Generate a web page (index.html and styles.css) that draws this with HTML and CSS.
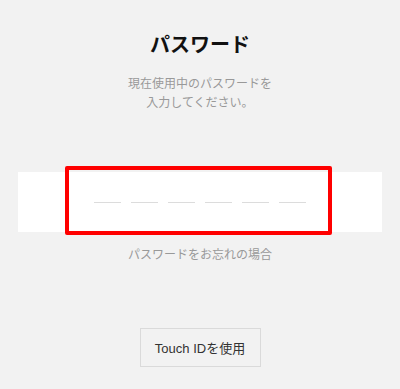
FILE: index.html
```html
<!DOCTYPE html>
<html lang="ja">
<head>
    <meta charset="UTF-8">
    <meta name="viewport" content="width=device-width, initial-scale=1.0">
    <title>パスワード</title>
    <link rel="stylesheet" href="styles.css">
</head>
<body>
    <div class="page">
        <h1 class="title">パスワード</h1>
        <p class="lead">現在使用中のパスワードを<br>入力してください。</p>

        <div class="code-strip">
            <div class="code-dashes">
                <span class="dash"></span>
                <span class="dash"></span>
                <span class="dash"></span>
                <span class="dash"></span>
                <span class="dash"></span>
                <span class="dash"></span>
            </div>
            <div class="highlight"></div>
        </div>

        <p class="forgot">パスワードをお忘れの場合</p>

        <button type="button" class="touch-btn">Touch IDを使用</button>
    </div>
</body>
</html>
```

FILE: styles.css
```css
html, body {
    margin: 0;
    padding: 0;
    background: #f2f2f2;
}
body {
    font-family: "Noto Sans CJK JP", "Noto Sans", sans-serif;
    width: 400px;
    height: 389px;
    overflow: hidden;
}
.page {
    display: flex;
    flex-direction: column;
    align-items: center;
}
.title {
    margin: 30px 0 0;
    font-size: 20px;
    line-height: 28px;
    font-weight: bold;
    color: #111;
}
.lead {
    margin: 15px 0 0;
    font-size: 12px;
    line-height: 19px;
    color: #999;
    text-align: center;
}
.code-strip {
    position: relative;
    align-self: stretch;
    margin: 61px 18px 0;
    height: 60px;
    background: #fff;
    display: flex;
    align-items: center;
    justify-content: center;
}
.code-dashes {
    display: flex;
    gap: 10px;
    margin-left: -1px;
}
.dash {
    width: 27px;
    height: 1px;
    background: #dcdcdc;
}
.highlight {
    position: absolute;
    left: 47px;
    top: -6px;
    width: 259px;
    height: 61px;
    border: 4px solid #f00;
    border-radius: 2px;
}
.forgot {
    margin: 12px 0 0;
    font-size: 12px;
    line-height: 19px;
    color: #999;
}
.touch-btn {
    margin-top: 65px;
    width: 121px;
    height: 39px;
    background: #f2f2f2;
    border: 1px solid #dadada;
    border-radius: 0;
    font-family: "Liberation Sans", "Noto Sans CJK JP", sans-serif;
    font-size: 13px;
    color: #333;
    padding: 0;
}
```
